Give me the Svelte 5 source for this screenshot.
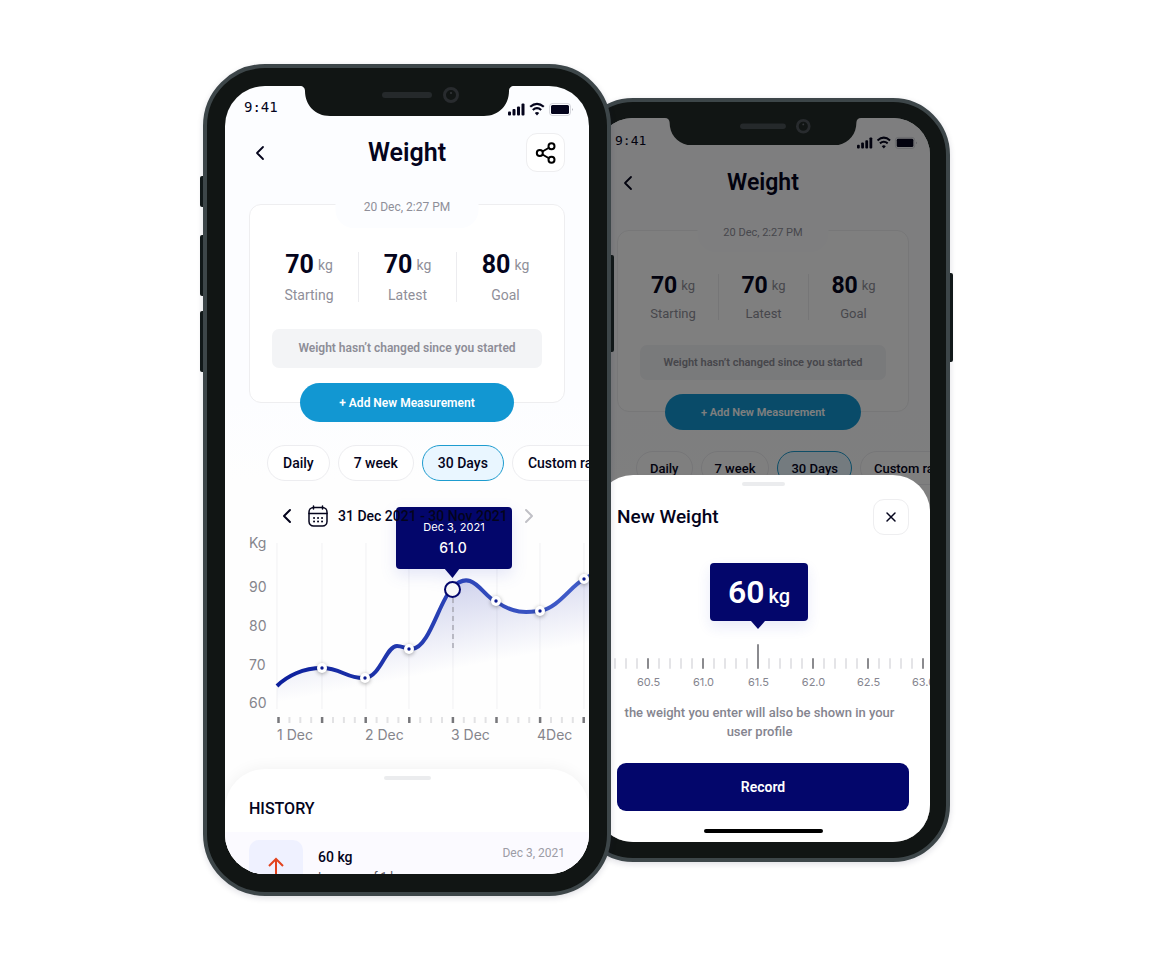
<script lang="ts">
  const ranges = ['Daily', '7 week', '30 Days', 'Custom range'];
  let active = $state('30 Days');
  let weight = $state(61.5);

  const stats = [
    { value: 70, label: 'Starting' },
    { value: 70, label: 'Latest' },
    { value: 80, label: 'Goal' }
  ];

  // chart coordinates, origin at the left edge of the screen
  const gridX = [52, 97, 141, 184, 228, 272, 315, 359];
  const line = 'M52 150 C62 140 78 132 97 132 C116 132 122 143 140 142 C156 140 161 110 172 110 C178 110 180 113 187 113 C204 112 214 66 227 52 C248 30 258 62 272 66 C290 79 304 76 315 75 C333 72 346 50 359 43 L368 38';
  const dots = [[97, 132], [140, 142], [184, 113], [271, 65], [315, 75], [359, 43]];
  const yLabels = [['Kg', 12], ['90', 56], ['80', 95], ['70', 134], ['60', 172]];
  const xLabels = [['1 Dec', 52], ['2 Dec', 140], ['3 Dec', 226], ['4Dec', 312]];

  const rulerTicks = Array.from({ length: 31 }, (_, i) => i);
  const rulerLabels = ['60.5', '61.0', '61.5', '62.0', '62.5', '63.0'];
</script>

{#snippet statusBar()}
  <div class="status">
    <span class="clock">9:41</span>
    <svg class="notch" viewBox="0 0 214 30" aria-hidden="true">
      <path d="M0 0H214C211 0 209 2 209 5C209 19 199 30 184 30H30C15 30 5 19 5 5C5 2 3 0 0 0Z" fill="#111514" />
      <rect x="82" y="6" width="50" height="6" rx="3" fill="#25292b" />
      <circle cx="151" cy="9" r="6.500" fill="#111514" stroke="#282b2e" stroke-width="3" />
      <circle cx="151" cy="7" r="1" fill="#34373a" />
    </svg>
    <svg class="signals" viewBox="0 0 66 14" aria-hidden="true">
      <g fill="#04041c">
        <rect x="0" y="9.500" width="3" height="4" rx="1" />
        <rect x="4.500" y="7" width="3" height="6.500" rx="1" />
        <rect x="9" y="4.500" width="3" height="9" rx="1" />
        <rect x="13.500" y="1.500" width="3" height="12" rx="1" />
        <rect x="43" y="3" width="18" height="9" rx="1.500" />
      </g>
      <path d="M22.200 4.800Q29 -1.200 35.800 4.800M24.800 8Q29 4.400 33.200 8" fill="none" stroke="#04041c" stroke-width="2.200" />
      <path d="M26.800 11Q29 9.200 31.200 11L29 13.500Z" fill="#04041c" />
      <rect x="41.500" y="1.500" width="21" height="12" rx="3" fill="none" stroke="#04041c" stroke-opacity=".15" />
      <path d="M64 6V9Q65.500 7.500 64 6Z" fill="#04041c" opacity=".4" />
    </svg>
  </div>
{/snippet}

{#snippet overview(withShare: boolean)}
  {@render statusBar()}
  <header class="top">
    <button class="icon-btn" aria-label="Back">
      <svg width="14" height="18" viewBox="0 0 14 18"><path d="M10 3 4 9l6 6" fill="none" stroke="#04041c" stroke-width="1.800" stroke-linecap="round" stroke-linejoin="round" /></svg>
    </button>
    <h1>Weight</h1>
    {#if withShare}
      <button class="square" aria-label="Share">
        <svg width="24" height="24" viewBox="0 0 24 24" fill="none" stroke="#000" stroke-width="2">
          <path d="m8.500 10.500 6-3.500M8.500 13.500l6 3.500" />
          <circle cx="5.800" cy="12" r="3" /><circle cx="17.500" cy="5.300" r="3" /><circle cx="17.500" cy="18.700" r="3" />
        </svg>
      </button>
    {:else}
      <span></span>
    {/if}
  </header>

  <section class="card">
    <p class="stamp">20 Dec, 2:27 PM</p>
    <div class="stats">
      {#each stats as stat}
        <div class="stat">
          <p class="value">{stat.value}<small>kg</small></p>
          <p class="label">{stat.label}</p>
        </div>
      {/each}
    </div>
    <p class="note">Weight hasn’t changed since you started</p>
    <button class="add">+ Add New Measurement</button>
  </section>

  <div class="chips">
    {#each ranges as range}
      <button class="chip" class:active={active === range} onclick={() => (active = range)}>{range}</button>
    {/each}
  </div>
{/snippet}

<main>
  <div class="phone front">
    <i class="key mute"></i><i class="key up"></i><i class="key down"></i><i class="key power"></i>
    <div class="screen">
      {@render overview(true)}

      <div class="period">
        <button class="icon-btn" aria-label="Previous period">
          <svg width="10" height="16" viewBox="0 0 10 16"><path d="M8 2 2 8l6 6" fill="none" stroke="#04041c" stroke-width="2" stroke-linecap="round" stroke-linejoin="round" /></svg>
        </button>
        <svg width="20" height="22" viewBox="0 0 20 22" fill="none" stroke="#04041c" stroke-width="1.500" stroke-linecap="round">
          <rect x="1" y="2.500" width="18" height="18.500" rx="4.500" />
          <path d="M1 8.500H19M5.500 1V4M14.500 1V4" />
          <path d="M6 13h.1M10 13h.1M14 13h.1M6 16.500h.1M10 16.500h.1M14 16.500h.1" stroke-width="1.900" />
        </svg>
        <span>31 Dec 2021 - 30 Nov 2021</span>
        <button class="icon-btn" aria-label="Next period">
          <svg width="10" height="16" viewBox="0 0 10 16"><path d="m2 2 6 6-6 6" fill="none" stroke="#c0c0c6" stroke-width="2" stroke-linecap="round" stroke-linejoin="round" /></svg>
        </button>
      </div>

      <svg class="chart" width="364" height="210" viewBox="0 0 364 210" role="img" aria-label="Weight by day">
        <defs>
          <linearGradient id="stroke" x1="0" x2="1"><stop stop-color="#0c1f9c" /><stop offset="1" stop-color="#4460cc" /></linearGradient>
          <linearGradient id="fade" gradientUnits="userSpaceOnUse" x1="203" y1="24" x2="224" y2="134">
            <stop stop-color="#1a28a8" stop-opacity=".26" /><stop offset="1" stop-color="#1a28a8" stop-opacity="0" />
          </linearGradient>
        </defs>
        {#each gridX as x}
          <path d="M{x} 7V173" stroke="#f1f1f3" />
        {/each}
        <path d="{line} V175 H52 Z" fill="url(#fade)" />
        <path d="M228 62V116" stroke="#a9a9b4" stroke-width="1.500" stroke-dasharray="5 4" />
        <path d={line} fill="none" stroke="url(#stroke)" stroke-width="4" />
        {#each dots as [x, y]}
          <g class="dot"><circle cx={x} cy={y} r="5" fill="#fff" /><circle cx={x} cy={y} r="1.700" fill="#0b1a90" /></g>
        {/each}
        {#each Array.from({ length: 29 }) as _, i}
          <path d="M{53.500 + i * 10.900} 181V187" stroke={i % 4 ? '#e2e2e4' : '#77777b'} stroke-width={i % 4 ? 2 : 2.500} />
        {/each}
        {#each yLabels as [text, y]}
          <text x="24" {y}>{text}</text>
        {/each}
        {#each xLabels as [text, x]}
          <text {x} y="204">{text}</text>
        {/each}
        <g class="tip"><rect x="171" y="-29" width="116" height="62" rx="4" /><path d="M219 32H235L227.500 42Z" /></g>
        <circle cx="227.500" cy="53.500" r="7.500" fill="#f8f8f8" stroke="#03066b" stroke-width="2" />
        <text class="tip-date" x="229" y="-5">Dec 3, 2021</text>
        <text class="tip-value" x="228" y="17">61.0</text>
      </svg>

      <section class="history">
        <i class="handle"></i>
        <h2>HISTORY</h2>
        <div class="entry">
          <span class="trend">
            <svg width="18" height="22" viewBox="0 0 18 22"><path d="M9 21V3M2 10l7-7 7 7" fill="none" stroke="#e2431e" stroke-width="2" /></svg>
          </span>
          <div>
            <p class="amount">60 kg</p>
            <p class="change">Increase of 1 kg</p>
          </div>
          <time datetime="2021-12-03">Dec 3, 2021</time>
        </div>
      </section>
    </div>
  </div>

  <div class="phone back">
    <i class="key power"></i>
    <div class="screen">
      {@render overview(false)}
      <div class="dim"></div>
      <section class="sheet">
        <i class="handle"></i>
        <div class="sheet-head">
          <h2>New Weight</h2>
          <button class="square" aria-label="Close">
            <svg width="12" height="12" viewBox="0 0 12 12"><path d="m2 2 8 8M10 2 2 10" stroke="#04041c" stroke-width="1.500" stroke-linecap="round" /></svg>
          </button>
        </div>
        <output class="bubble">60<small>kg</small></output>
        <div class="ruler">
          <div class="ticks">
            {#each rulerTicks as i}
              <i class:major={i % 5 === 3} class:current={i === 13}></i>
            {/each}
          </div>
          <div class="marks">
            {#each rulerLabels as mark}
              <span>{mark}</span>
            {/each}
          </div>
          <input type="range" min="60" max="63" step="0.1" bind:value={weight} aria-label="New weight in kg" />
        </div>
        <p class="hint">the weight you enter will also be shown in your user profile</p>
        <button class="record">Record</button>
        <i class="home"></i>
      </section>
    </div>
  </div>
</main>

<style>
  :global(body) { margin: 0; background: #fff; }
  main {
    min-height: 100vh; display: flex; justify-content: center; align-items: center;
    font-family: Roboto, "Noto Sans", sans-serif; color: #04041c;
  }
  h1, h2, p { margin: 0; }
  i { display: block; }
  button { font-family: inherit; color: inherit; cursor: pointer; padding: 0; box-sizing: border-box; }

  .phone {
    --pad: 24px; --clock: 14px; --title: 25px; --status-h: 30px; --notch-w: 214px; --signals-w: 66px;
    --top-h: 73px; --card-h: 199px; --big: 25px; --unit: 14px; --text: 14px; --small: 12px;
    --stat-top: 47px; --value-h: 26px; --label-gap: 11px; --label-h: 13px; --note-gap: 27px; --note-h: 39px;
    --add-w: 214px; --add-h: 39px; --add-drop: -20px; --chip-gap: 42px; --chip-h: 36px; --chip-pad: 15px; --chip-x: 42px;
    --stamp-w: 143px; --stamp-h: 44px; --stamp-up: -21px;
    position: relative; box-sizing: border-box; background: #111514; border: 4px solid #3d4649;
  }
  .front {
    flex: 0 1 408px; aspect-ratio: 408 / 832; padding: 18px; border-radius: 62px;
    z-index: 1; margin-right: -35px; box-shadow: 0 2px 6px rgba(20, 20, 60, .14);
  }
  .back {
    --pad: 21px; --clock: 13px; --title: 23px; --status-h: 27px; --notch-w: 196px; --signals-w: 61px;
    --top-h: 75px; --card-h: 182px; --big: 23px; --unit: 13px; --text: 13px; --small: 11px;
    --stat-top: 43px; --value-h: 24px; --label-gap: 10px; --label-h: 12px; --note-gap: 25px; --note-h: 35px;
    --add-w: 196px; --add-h: 36px; --add-drop: -19px; --chip-gap: 39px; --chip-h: 34px; --chip-pad: 13px; --chip-x: 40px;
    --stamp-w: 131px; --stamp-h: 40px; --stamp-up: -19px;
    flex: 0 1 374px; aspect-ratio: 374 / 764; padding: 16px; border-radius: 57px;
    box-shadow: 0 2px 6px rgba(20, 20, 60, .14);
  }
  .key { position: absolute; width: 3px; left: -7px; background: #111819; border-radius: 2px 0 0 2px; }
  .mute { top: 108px; height: 31px; }
  .up { top: 167px; height: 61px; }
  .down { top: 243px; height: 61px; }
  .power { left: auto; right: -7px; top: 187px; height: 97px; border-radius: 0 2px 2px 0; }
  .back .power { top: 171px; height: 89px; }

  .screen {
    position: relative; height: 100%; overflow: hidden; border-radius: 40px;
    background: linear-gradient(#fcfdff 0 40%, #fefefe 50%); display: flex; flex-direction: column;
  }
  .back .screen { border-radius: 37px; }

  .status { position: relative; flex: none; height: var(--status-h); display: flex; justify-content: space-between; }
  .clock { margin: 12px 0 0 19px; font: var(--clock) / 18px "DejaVu Sans Mono", monospace; }
  .back .clock { margin-top: 14px; }
  .notch { position: absolute; left: 50%; top: 0; width: var(--notch-w); translate: -50% 0; }
  .signals { width: var(--signals-w); margin: 16px 15px 0 0; align-self: flex-start; }
  .back .signals { margin: 18px 12px 0 0; }

  .top {
    flex: none; height: var(--top-h); padding: 0 var(--pad);
    display: grid; grid-template-columns: 1fr auto 1fr; align-items: center;
  }
  h1 { font-size: var(--title); line-height: 32px; font-weight: 600; }
  .icon-btn { display: flex; border: 0; background: none; }
  .top .icon-btn { justify-self: start; margin-left: 4px; }
  .square {
    width: 39px; height: 39px; justify-self: end; display: grid; place-items: center;
    background: #fff; border: 1px solid #eeeef0; border-radius: 11px;
  }
  .back .square { width: 36px; height: 36px; }

  .card {
    position: relative; flex: none; box-sizing: border-box; height: var(--card-h); margin: 15px var(--pad) 0; padding: 0 22px;
    background: #fff; border: 1px solid #eeeef0; border-radius: 12px;
  }
  .back .card { margin-top: 10px; }
  .stamp {
    position: absolute; left: 50%; top: var(--stamp-up); translate: -50% 0; width: var(--stamp-w); height: var(--stamp-h);
    line-height: 46px; text-align: center; font-size: var(--small); color: #8f8f99;
    background: #fcfdff; border-radius: 0 0 18px 18px;
  }
  .back .stamp { line-height: 41px; }
  .stats { display: grid; grid-template-columns: repeat(3, 1fr); margin: 0 -12px; padding-top: var(--stat-top); }
  .stat { text-align: center; }
  .stat + .stat { border-left: 1px solid #ececef; }
  .value {
    display: flex; justify-content: center; align-items: center; gap: 4px;
    height: var(--value-h); font-size: var(--big); line-height: var(--value-h); font-weight: 700;
  }
  .value small { font-size: var(--unit); font-weight: 400; color: #8f8f99; }
  .label { margin-top: var(--label-gap); font-size: var(--text); line-height: var(--label-h); color: #8f8f99; }
  .note {
    margin-top: var(--note-gap); height: var(--note-h); line-height: var(--note-h); text-align: center;
    font-size: var(--small); font-weight: 600; color: #8d8d97; background: #f3f4f6; border-radius: 7px;
  }
  .add {
    position: absolute; left: 50%; bottom: var(--add-drop); translate: -50% 0; width: var(--add-w); height: var(--add-h);
    border: 0; border-radius: 20px; background: #1297d2; color: #fff; font-size: var(--small); font-weight: 600;
  }
  .chips { flex: none; display: flex; gap: 8px; margin-top: var(--chip-gap); padding-left: var(--chip-x); }
  .chip {
    flex: none; height: var(--chip-h); padding: 0 var(--chip-pad); border: 1px solid #ededf0; border-radius: 19px;
    background: #fff; font-size: var(--text); font-weight: 500;
  }
  .chip.active { background: #e9f6ff; border-color: #1e9ccf; }

  .period {
    position: relative; z-index: 1; flex: none; display: flex; align-items: center; height: 22px; gap: 10px;
    margin: 24px 0 0 57px; font-size: 14px; font-weight: 500;
  }
  .period .icon-btn:first-child { margin-right: 6px; }
  .period .icon-btn:last-child { margin-left: 6px; }
  .chart {
    flex: none; margin-top: 9px; overflow: visible;
    font-family: Inter, sans-serif; font-size: 14px; fill: #85858c;
  }
  .dot { filter: drop-shadow(0 1px 2px rgba(0, 0, 0, .35)); }
  .tip { fill: #03066b; filter: drop-shadow(0 6px 8px rgba(40, 60, 200, .12)); }
  .tip-date, .tip-value { text-anchor: middle; fill: #fff; font-size: 11px; }
  .tip-value { font-size: 14px; font-weight: 500; }

  .history {
    position: relative; flex: none; margin-top: 23px; background: #fff; border-radius: 40px 40px 0 0;
    box-shadow: 0 0 16px rgba(0, 0, 0, .06);
  }
  .handle { width: 47px; height: 4px; margin: 0 auto; border-radius: 2px; background: #ebecee; }
  .history .handle { position: relative; top: 7px; }
  .history h2 { padding: 24px 24px 11px; font-size: 16px; line-height: 24px; font-weight: 500; }
  .entry { display: flex; align-items: flex-start; padding: 8px 24px; background: #fbfaff; }
  .trend { display: grid; place-items: center; width: 54px; height: 54px; margin-right: 15px; border-radius: 10px; background: #eff1ff; }
  .amount { padding-top: 8px; font-size: 14px; line-height: 18px; font-weight: 500; }
  .change { font-size: 12px; line-height: 22px; color: #55555f; }
  .entry time { margin-left: auto; font-size: 12px; line-height: 26px; color: #9c9ca6; }

  .dim { position: absolute; inset: 0; background: rgba(0, 0, 0, .5); }
  .back .notch { z-index: 1; }
  .sheet {
    position: absolute; left: 0; right: 0; bottom: 0; display: flex; flex-direction: column;
    background: #fff; border-radius: 37px 37px 0 0;
  }
  .sheet .handle { width: 43px; margin-top: 7px; }
  .sheet-head { display: flex; justify-content: space-between; align-items: center; margin: 13px 21px 0; }
  .sheet-head h2 { font-size: 19px; line-height: 26px; font-weight: 500; }
  .bubble {
    position: relative; align-self: center; display: flex; align-items: baseline; justify-content: center; gap: 4px;
    width: 98px; height: 58px; margin: 28px 8px 0 0; line-height: 58px; border-radius: 4px;
    background: #03066b; color: #fff; font-size: 32px; font-weight: 600; box-shadow: 0 6px 14px rgba(40, 60, 200, .1);
  }
  .bubble small { font-size: 20px; font-weight: 500; }
  .bubble::after {
    content: ""; position: absolute; left: 50%; top: 100%; margin-left: -8px;
    border: 7px solid transparent; border-top: 8px solid #03066b; border-bottom: 0;
  }
  .ruler { position: relative; overflow: hidden; margin-top: 23px; }
  .ticks { display: flex; align-items: flex-end; height: 25px; margin-left: 18px; }
  .ticks i { flex: none; width: 2px; height: 11px; margin-right: 9px; background: #e4e4e7; border-radius: 1px; }
  .ticks .major { background: #8a8a8e; }
  .ticks .current { height: 25px; }
  .marks { display: flex; margin: 5px 0 0 25px; font: 11px / 16px Inter, sans-serif; color: #85858f; }
  .marks span { flex: none; width: 55px; text-align: center; }
  .ruler input { position: absolute; inset: 0; width: 100%; margin: 0; opacity: 0; cursor: pointer; }
  .hint { margin: 13px 29px 0 22px; text-align: center; font-size: 13px; line-height: 19px; color: #85858f; font-weight: 500; }
  .record {
    height: 48px; margin: 22px 21px 0; border: 0; border-radius: 9px; background: #03066b;
    color: #fff; font-size: 14px; font-weight: 600;
  }
  .home { width: 119px; height: 4px; margin: 18px auto 9px; border-radius: 2px; background: #000; }
</style>
